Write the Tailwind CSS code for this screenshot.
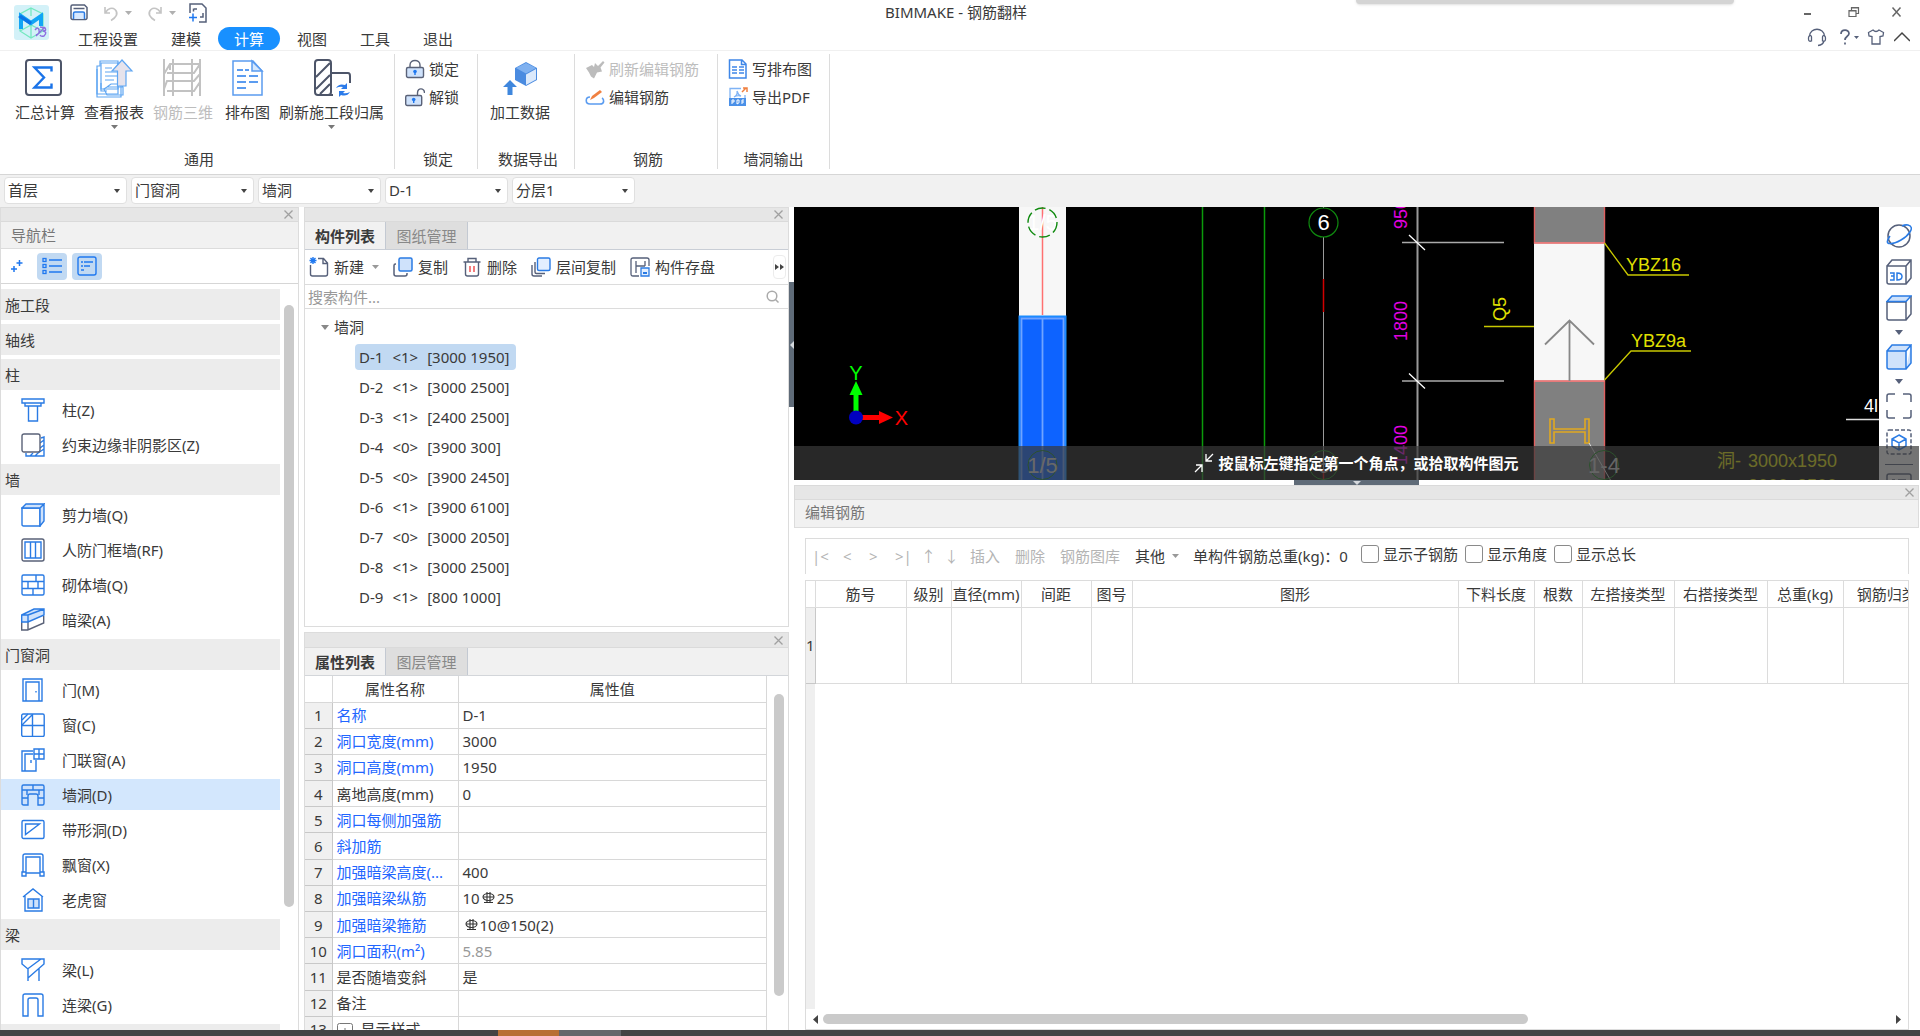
<!DOCTYPE html>
<html lang="zh-CN">
<head>
<meta charset="utf-8">
<title>BIMMAKE - 钢筋翻样</title>
<script src="https://cdn.jsdelivr.net/npm/@tailwindcss/browser@4"></script>
</head>
<body class="flex h-screen flex-col overflow-hidden bg-white font-['Noto_Sans','Noto_Sans_CJK_SC',sans-serif] text-[15px] leading-5 text-[#3a3a3a]">

<!-- Title bar and tabs -->
<header class="relative flex h-[51px] shrink-0 border-b border-[#f0f0f0]">
  <div class="absolute -top-1 right-[186px] h-2 w-[378px] rounded bg-[#d4d4d4] shadow"></div>
  <div class="w-[62px] shrink-0 pt-[5px] pl-[14px]">
    <svg class="size-[35px]" viewBox="0 0 35 35" fill="none"><rect width="35" height="35" rx="3" fill="#d3f1f8"/><path d="M17 3 29 9v17L17 33 6 26V9z M6 26 17 20l12 6 M17 3v8 M17 20v13" stroke="#74e8c0" stroke-width="1.3"/><path d="M7 24V11l10 7 10-7v10" stroke="#12a5f5" stroke-width="4"/><path d="M4 12l3-2 11 7-2 3z" fill="#0b74e8"/><path d="M21 25q3-4 4 0t-3 5M26 22l5 1q2 3-2 3 5 1 1 5-3 1-4-1M22 31l9-9" stroke="#8d6ee0" stroke-width="1.4"/></svg>
  </div>
  <div class="flex flex-1 flex-col">
    <div class="flex h-7 items-center pb-[2px]">
      <button aria-label="保存" class="ml-[8px]"><svg class="size-[18px]" viewBox="0 0 18 18" fill="none"><path d="M1 4V2.500a1.500 1.500 0 0 1 1.500-1.500h12l2.500 2.500V14a1.500 1.500 0 0 1-1.500 1.500h-13A1.500 1.500 0 0 1 1 14z" stroke="#56607a" stroke-width="1.500"/><path d="M3.500 4.500h11" stroke="#56607a" stroke-width="1.500"/><path d="M3.500 15V9.500a1.500 1.500 0 0 1 1.500-1.500h8a1.500 1.500 0 0 1 1.500 1.500V15" fill="#d8e9ff" stroke="#2a7be4" stroke-width="1.500"/></svg></button>
      <button aria-label="撤销" class="ml-[14px]"><svg class="size-[18px]" viewBox="0 0 18 18" fill="none" stroke="#c4c4c4" stroke-width="1.600"><path d="M3 3v6h5M3.500 8.500C6 4.500 10 3 13 5.500c4 4 1 8-4 11"/></svg></button>
      <svg class="ml-[5px] h-1 w-[7px]" viewBox="0 0 7 4" fill="#b0b0b0"><path d="M0 0h7L3.500 4z"/></svg>
      <button aria-label="重做" class="ml-[14px]"><svg class="size-[18px]" viewBox="0 0 18 18" fill="none" stroke="#c4c4c4" stroke-width="1.600"><path d="M15 3v6h-5M14.500 8.500C12 4.500 8 3 5 5.500c-4 4-1 8 4 11"/></svg></button>
      <svg class="ml-[5px] h-1 w-[7px]" viewBox="0 0 7 4" fill="#b0b0b0"><path d="M0 0h7L3.500 4z"/></svg>
      <button aria-label="新建视图" class="ml-[12px]"><svg class="size-5" viewBox="0 0 20 20" fill="none" stroke="#56607a" stroke-width="1.500"><path d="M2 10V1h12l4 4v14h-7M6 6h3M5.500 5.500v3M15 10v4h-3"/><path d="M1 14.500h8M5 10.500v8" stroke="#1f78f0"/></svg></button>
    </div>
    <nav class="flex h-[23px] gap-px">
      <button class="px-4">工程设置</button><button class="px-4">建模</button><button class="rounded-full bg-[#1890ff] px-4 text-white">计算</button><button class="px-4">视图</button><button class="px-4">工具</button><button class="px-4">退出</button>
    </nav>
  </div>
  <h1 class="absolute inset-x-0 top-[2px] pr-2 text-center font-normal">BIMMAKE - 钢筋翻样</h1>
  <div class="flex w-[116px] shrink-0 flex-col pr-[10px]">
    <div class="flex h-6 items-center justify-between pr-[7px]">
      <button aria-label="最小化"><svg class="size-3" viewBox="0 0 12 12"><path d="M0 7h7v2H0z" fill="#666"/></svg></button>
      <button aria-label="还原"><svg class="size-3" viewBox="0 0 12 12" fill="none" stroke="#666" stroke-width="1.200"><path d="M1 4.500h7v6H1zM1 5h7M3.500 4V1.500h7v6H8M3.500 2h7"/></svg></button>
      <button aria-label="关闭"><svg class="size-3" viewBox="0 0 12 12" fill="none" stroke="#666" stroke-width="1.500"><path d="m1.500 1.500 8 9M9.500 1.500l-8 9"/></svg></button>
    </div>
    <div class="flex h-[26px] items-center justify-between pl-[3px]">
      <button aria-label="客服"><svg class="size-5" viewBox="0 0 20 20" fill="none" stroke="#56607a" stroke-width="1.300"><path d="M2.500 9C3 0 17 0 17.500 9M2.500 9q2-1 2 1v4q-3 1-3-2 0-3 1-3zM17.500 9q-2-1-2 1v4q3 1 3-2 0-3-1-3zM17 14q-1 4-6 4.500"/></svg></button>
      <button aria-label="帮助" class="flex items-center"><svg class="size-[18px]" viewBox="0 0 18 18" fill="none" stroke="#56607a" stroke-width="1.700"><path d="M5 6c0-5 8-5 8-.5C13 8.500 9 8 9 12M9 14.500v2"/></svg><svg class="h-[3px] w-[5px]" viewBox="0 0 5 3" fill="#56607a"><path d="M0 0h5L2.500 3z"/></svg></button>
      <button aria-label="皮肤"><svg class="size-[18px]" viewBox="0 0 18 18" fill="none" stroke="#56607a" stroke-width="1.300"><path d="M6 2q3 3 6 0l4.500 2.500L16 8l-3 .5V16H5V8.500L2 8l-.5-3.500z"/></svg></button>
      <button aria-label="收起"><svg class="h-[18px] w-4" viewBox="0 0 16 18" fill="none" stroke="#444" stroke-width="1.500"><path d="m0 13 8-8 8 8"/></svg></button>
    </div>
  </div>
</header>

<!-- Ribbon -->
<section class="flex h-[124px] shrink-0 border-b border-[#d6d6d6] pt-[3px]">
  <div class="flex h-[115px] w-[395px] flex-col items-center justify-between border-r border-[#dcdcdc]">
    <div class="flex w-full gap-[9px] pt-[3px] pl-[15px]">
      <button class="flex w-[60px] flex-col items-center whitespace-nowrap"><svg class="size-[42px]" viewBox="0 0 42 42" fill="none"><rect x="2" y="3" width="35" height="35" rx="3" stroke="#4d5569" stroke-width="2"/><path d="M27.500 14.500v-4H10.500l9.500 10-9.500 10h17v-4" stroke="#1a73e8" stroke-width="2.400"/></svg><span class="mt-[3px]">汇总计算</span></button>
      <button class="flex w-[60px] flex-col items-center whitespace-nowrap"><svg class="size-[42px]" viewBox="0 0 42 42" fill="none" stroke="#5fa6f2" stroke-width="1.200"><path d="M7 4h18v33H4V9h3z" fill="#fff"/><path d="M8 6h17v26H8zM4 12v28h24V24"/><path d="M12 11h7M12 15h12M12 19h12M12 23h9M8 26v8h6M14 30h16v8H14l-3-6zM14 30l4-3h13l-2 3"/><path d="M29 3 19 14h5.500v15h8.500V14H39z" fill="#e6e3ec"/></svg><span class="mt-[3px]">查看报表</span><svg class="mt-[3px] h-1 w-[7px]" viewBox="0 0 7 4" fill="#777"><path d="M0 0h7L3.500 4z"/></svg></button>
      <button disabled class="flex w-[60px] flex-col items-center whitespace-nowrap text-[#bdbdbd]"><svg class="size-[42px]" viewBox="0 0 42 42" fill="none" stroke="#c2c2c2" stroke-width="2"><path d="M2 2v37M11 2v37M30 2v37M38 2v37M2 17l6-10h30M8 7v6M5 16h27l6-9M11 24H5l-3 8M11 24h21l6-7M5 34h27l6-9M30 7v9"/></svg><span class="mt-[3px]">钢筋三维</span></button>
      <button class="ml-[3px] flex w-[45px] flex-col items-center whitespace-nowrap"><svg class="size-[42px]" viewBox="0 0 42 42" fill="none" stroke="#5b9cf0" stroke-width="1.500"><path d="M6 4h20l9 10v24H6z" fill="#fff"/><path d="M25 4v10h10z" fill="#d6e8fd"/><path d="M10 13h6M18 13h4M10 19h9M22 19h9M10 25h9M22 25h9M10 31h9" stroke-width="2"/></svg><span class="mt-[3px]">排布图</span></button>
      <button class="flex w-[105px] flex-col items-center whitespace-nowrap"><svg class="size-[42px]" viewBox="0 0 42 42" fill="none" stroke="#4d5569" stroke-width="2"><rect x="4" y="3" width="16" height="35" rx="3"/><path d="M5 20 19 6M5 32l14-14M9 37l10-10M20 16h17q2 0 2 3v7M15 38h7"/><path d="M25 31q3-5 9-3l2-2v6h-6l2-2q-3-1-7 1zM39 35q-3 5-9 3l-2 2v-6h6l-2 2q3 1 7-1z" fill="#2b7bea" stroke="none"/></svg><span class="mt-[3px]">刷新施工段归属</span><svg class="mt-[3px] h-1 w-[7px]" viewBox="0 0 7 4" fill="#777"><path d="M0 0h7L3.500 4z"/></svg></button>
    </div>
    <div class="pl-1">通用</div>
  </div>
  <div class="flex h-[115px] w-[83px] flex-col items-center justify-between border-r border-[#dcdcdc]">
    <div class="flex w-full flex-col items-start gap-2 pt-[5px] pl-[10px]">
      <button class="flex items-center gap-1"><svg class="size-5" viewBox="0 0 20 20" fill="none" stroke="#5a6278" stroke-width="1.400"><path d="M5 9V6C5 0 15 0 15 6v3"/><rect x="1.500" y="8.500" width="17" height="10" rx="1.500" fill="#cfe2fb"/><circle cx="10" cy="12.500" r="1.800" fill="#1f78f0" stroke="none"/><path d="M10 12v4" stroke="#1f78f0"/></svg>锁定</button>
      <button class="flex items-center gap-1"><svg class="size-5" viewBox="0 0 20 20" fill="none" stroke="#5a6278" stroke-width="1.400"><path d="M12.500 9V6c0-6 7-5 7 0"/><rect x=".7" y="8.500" width="16" height="10" rx="1.500" fill="#cfe2fb"/><circle cx="8.700" cy="12.500" r="1.800" fill="#1f78f0" stroke="none"/><path d="M8.700 12v4" stroke="#1f78f0"/></svg>解锁</button>
    </div>
    <div class="pl-1">锁定</div>
  </div>
  <div class="flex h-[115px] w-[97px] flex-col items-center justify-between border-r border-[#dcdcdc]">
    <button class="flex flex-col items-center pt-[3px] pr-3"><svg class="size-[42px]" viewBox="0 0 42 42"><path d="m27 5 11 6v12l-11 6-11-6V11z" fill="#4a8be0"/><path d="m27 6 10 5-10 5.500-10-5.500z" fill="#7fb1f0"/><path d="m27 17.500 10-5.500v10.500L27 28z" fill="#dbe9fb"/><path d="m11 23-7 7h4.500v8h5v-8H18z" fill="#3f87dd"/></svg><span class="mt-[3px]">加工数据</span></button>
    <div class="pl-1">数据导出</div>
  </div>
  <div class="flex h-[115px] w-[143px] flex-col items-center justify-between border-r border-[#dcdcdc]">
    <div class="flex w-full flex-col items-start gap-2 pt-[5px] pl-[10px]">
      <button disabled class="flex items-center gap-1 text-[#bdbdbd]"><svg class="size-5" viewBox="0 0 20 20" fill="#bcbcbc"><path d="m1 9 6-3 2 2 1-4 3 3 5-5 1.500 1.500-4 5 1.500 4-5 1-3 6-3-2-1-2-1-2z"/></svg>刷新编辑钢筋</button>
      <button class="flex items-center gap-1"><svg class="size-5" viewBox="0 0 20 20" fill="none"><path d="M5 10c-5 0-5 7 0 7h10c5 0 4-5 2-6" stroke="#5b9cf0" stroke-width="1.600"/><path d="m5 13 2-4 8-6 2 2-8 6z" fill="#f08040"/></svg>编辑钢筋</button>
    </div>
    <div class="pl-1">钢筋</div>
  </div>
  <div class="flex h-[115px] w-[112px] flex-col items-center justify-between border-r border-[#dcdcdc]">
    <div class="flex w-full flex-col items-start gap-2 pt-[5px] pl-[10px]">
      <button class="flex items-center gap-1"><svg class="size-5" viewBox="0 0 20 20" fill="none" stroke="#3f87e8" stroke-width="1.500"><path d="M1.500 1H14l4 4v14H1.500zM13.500 1v4.500H18"/><path d="M4 8h5M11 8h5M4 11h5M11 11h5M4 14h5M11 14h5"/></svg>写排布图</button>
      <button class="flex items-center gap-1"><svg class="size-5" viewBox="0 0 20 20" fill="none"><path d="M2 11V1.500h11M17 8v3M9 4q1 4-3 6 3-2 7-1-3-1-4-5z" stroke="#7fb3f5" stroke-width="1.300"/><path d="M1 11h17v8H1z" fill="#4a90e8"/><path d="M4 17v-4h2v2H4M9 13v4q3-.5 2-4zM14 17v-4h2M14 15h2" stroke="#fff"/><path d="m14 5 4-4M15 1h4v4" stroke="#f08040" stroke-width="1.500"/></svg>导出PDF</button>
    </div>
    <div>墙洞输出</div>
  </div>
</section>

<!-- Context selectors -->
<form class="flex h-8 shrink-0 gap-1 bg-[#f1f1f1] pt-[2px] pl-1" id="combos"></form>

<main class="flex min-h-0 flex-1">
  <!-- Navigation panel -->
  <aside class="flex w-[299px] shrink-0 flex-col border-x border-[#dcdcdc]">
    <div class="flex h-[15px] shrink-0 items-center justify-end border-y border-[#dadada] bg-[#e6e6e6] pr-1"><button aria-label="关闭导航栏"><svg class="size-[11px]" viewBox="0 0 11 11" stroke="#a0a0a0" stroke-width="1.300"><path d="m1.500 1.500 8 8M9.500 1.500l-8 8"/></svg></button></div>
    <h2 class="h-[27px] shrink-0 border-b border-[#dcdcdc] bg-[#f1f1f1] pt-[3px] pl-[10px] text-[#777]">导航栏</h2>
    <div class="flex h-[35px] shrink-0 items-center gap-[5px] border-b border-[#d6d6d6] pl-2">
      <button aria-label="添加" class="mr-2"><svg class="size-[15px]" viewBox="0 0 15 15" stroke="#1f78f0" stroke-width="1.500"><path d="M10.500 1v6M7.500 4h6M5 7v6M2 10h6"/></svg></button>
      <button aria-label="列表" class="flex h-[27px] w-[30px] items-center justify-center rounded bg-[#c1d9f2]"><svg class="size-5" viewBox="0 0 20 20" fill="none" stroke="#1f78f0" stroke-width="1.300"><path d="M7 4h13M7 10h13M7 16h13"/><rect x="1" y="2.500" width="3" height="3"/><rect x="1" y="8.500" width="3" height="3"/><rect x="1" y="14.500" width="3" height="3"/></svg></button>
      <button aria-label="详细" class="flex h-[27px] w-[30px] items-center justify-center rounded bg-[#c1d9f2]"><svg class="size-5" viewBox="0 0 20 20" fill="none" stroke="#1f78f0" stroke-width="1.400"><rect x="1" y="1" width="18" height="18" rx="2"/><path d="M4 6h2M7 6h9M4 10h2M7 10h6M4 14h3"/></svg></button>
    </div>
    <div class="flex min-h-0 flex-1 overflow-hidden pt-[5px]">
      <div class="flex flex-1 flex-col gap-1" id="nav"></div>
      <div class="w-[18px] pt-4 pl-1"><div class="h-[602px] w-[10px] rounded-full bg-[#cacaca]"></div></div>
    </div>
  </aside>

  <!-- Component list and properties -->
  <section class="ml-[5px] flex w-[485px] shrink-0 flex-col">
    <div class="flex h-[420px] shrink-0 flex-col border border-[#dcdcdc]">
      <div class="flex h-[14px] shrink-0 items-center justify-end border-b border-[#dadada] bg-[#e6e6e6] pr-1"><button aria-label="关闭构件列表"><svg class="size-[11px]" viewBox="0 0 11 11" stroke="#a0a0a0" stroke-width="1.300"><path d="m1.500 1.500 8 8M9.500 1.500l-8 8"/></svg></button></div>
      <div class="flex h-[28px] shrink-0 border-b border-[#c9ced6] bg-[#f1f1f1]">
        <button class="w-[81px] border-r border-[#c3c9d2] font-bold">构件列表</button><button class="w-[82px] border-r border-[#c3c9d2] bg-[#dedede] text-[#888]">图纸管理</button>
      </div>
      <div class="flex h-[35px] shrink-0 items-center gap-[14px] border-b border-[#dcdcdc] pl-1 whitespace-nowrap">
        <button class="flex items-center gap-[5px]"><svg class="size-5" viewBox="0 0 20 20" fill="none" stroke="#56607a" stroke-width="1.400"><path d="M1.500 8v9q0 2 2 2h13q2 0 2-2V6l-4-4.500H9M14 2v4.500h4.500"/><path d="M4 0v7M.5 3.500h7M1.500 1l5 5M6.500 1l-5 5" stroke="#1f78f0"/></svg>新建<svg class="ml-[3px] h-1 w-[7px]" viewBox="0 0 7 4" fill="#999"><path d="M0 0h7L3.500 4z"/></svg></button>
        <button class="flex items-center gap-[5px]"><svg class="size-5" viewBox="0 0 20 20" fill="none" stroke-width="1.500"><path d="M3 7H2.500Q1 7 1 8.500V17q0 2 2 2h9q2 0 2-2v-1" stroke="#56607a"/><rect x="6" y="1" width="13" height="13" rx="1.500" fill="#cfe2fb" stroke="#2a7be4"/></svg>复制</button>
        <button class="flex items-center gap-[5px]"><svg class="size-5" viewBox="0 0 20 20" fill="none" stroke="#56607a" stroke-width="1.400"><path d="M1.500 5h17M6 5V1.500h8V5M3.500 5v12q0 2 2 2h9q2 0 2-2V5"/><path d="M8 9v6M12 9v6" stroke="#f04848"/></svg>删除</button>
        <button class="flex items-center gap-[5px]"><svg class="size-5" viewBox="0 0 20 20" fill="none" stroke-width="1.400"><path d="M4 5v10q0 1.500 1.500 1.500H14M1 8v9q0 2 2 2h8" stroke="#56607a"/><rect x="6.500" y="1" width="12.500" height="12.500" rx="1.500" fill="#e3efff" stroke="#2a7be4"/></svg>层间复制</button>
        <button class="flex items-center gap-[5px]"><svg class="size-5" viewBox="0 0 20 20" fill="none" stroke="#56607a" stroke-width="1.300"><path d="M9 19H3q-2 0-2-2V3q0-2 2-2h14q2 0 2 2v6M6 16V4M6 9h9M15 4v5"/><path d="M11 11h8v8h-8z" fill="#e3efff" stroke="#2a7be4"/><path d="M13 15h4v2h-4z" fill="#2a7be4" stroke="none"/></svg>构件存盘</button>
        <button aria-label="更多" class="mr-[2px] ml-auto flex h-6 w-[13px] items-center justify-center rounded border border-[#ececec]"><svg class="h-[6px] w-[9px]" viewBox="0 0 9 6" fill="#444"><path d="m0 0 4 3-4 3zM5 0l4 3-4 3z"/></svg></button>
      </div>
      <label class="flex h-6 shrink-0 items-center border-b border-[#dcdcdc] pr-[9px] pl-[3px]">
        <input type="text" aria-label="搜索构件" placeholder="搜索构件..." class="flex-1 outline-none placeholder:text-[#999]">
        <svg class="size-[13px]" viewBox="0 0 13 13" fill="none" stroke="#aaa" stroke-width="1.500"><circle cx="6" cy="6" r="4.800"/><path d="m9.500 9.500 3 3"/></svg>
      </label>
      <div class="flex flex-col pt-[3px] pl-4" id="tree">
        <button class="flex h-[30px] items-center gap-[5px]"><svg class="h-[5px] w-2" viewBox="0 0 8 5" fill="#888"><path d="M0 0h8L4 5z"/></svg>墙洞</button>
      </div>
    </div>
    <div class="mt-[5px] flex min-h-0 flex-1 flex-col border border-b-0 border-[#dcdcdc]">
      <div class="flex h-[15px] shrink-0 items-center justify-end border-b border-[#dadada] bg-[#e6e6e6] pr-1"><button aria-label="关闭属性列表"><svg class="size-[11px]" viewBox="0 0 11 11" stroke="#a0a0a0" stroke-width="1.300"><path d="m1.500 1.500 8 8M9.500 1.500l-8 8"/></svg></button></div>
      <div class="flex h-[28px] shrink-0 border-b border-[#d3d6da] bg-[#f1f1f1]">
        <button class="w-[81px] border-r border-[#c3c9d2] font-bold">属性列表</button><button class="w-[82px] border-r border-[#c3c9d2] bg-[#dedede] text-[#888]">图层管理</button>
      </div>
      <div class="flex min-h-0 flex-1 overflow-hidden">
        <table class="h-[367px] w-[462px] table-fixed border-collapse">
          <colgroup><col class="w-[27px]"><col class="w-[126px]"><col></colgroup>
          <thead><tr class="h-[26px]"><th class="border-r border-b border-[#d8d8d8]"></th><th class="border-r border-b border-[#d8d8d8] font-normal">属性名称</th><th class="border-r border-b border-[#d8d8d8] font-normal">属性值</th></tr></thead>
          <tbody id="props"></tbody>
        </table>
        <div class="pt-[18px] pl-[7px]"><div class="h-[302px] w-[10px] rounded-full bg-[#cacaca]"></div></div>
      </div>
    </div>
  </section>

  <!-- Splitter -->
  <div class="flex w-[5px] shrink-0 flex-col pt-[75px]"><div class="flex h-[125px] items-center justify-center bg-[#5f6b78]"><svg class="h-2 w-1" viewBox="0 0 4 8" fill="#d4d8dd"><path d="M4 0v8L0 4z"/></svg></div></div>

  <section class="flex min-w-0 flex-1 flex-col pr-px">
    <!-- Drawing viewport -->
    <div class="relative flex h-[273px] shrink-0 overflow-hidden bg-black">
      <svg class="h-full min-w-0 flex-1 font-['Liberation_Sans_Narrow','Liberation_Sans',sans-serif]" viewBox="794 207 1085 273" preserveAspectRatio="xMinYMin slice" fill="none">
        <path d="M1019 200h47v116h-47z" fill="#f7f7f7"/><path d="M1042.500 207v108" stroke="#ff7070" stroke-width="1.500"/>
        <text x="1042.500" y="230" font-size="22" text-anchor="middle" fill="#fff">1/5</text>
        <circle cx="1042.500" cy="222.500" r="14.500" stroke="#0f8a0f" stroke-width="1.400" stroke-dasharray="11 4"/>
        <path d="M1019.500 316.500h46v180h-46z" fill="#0d63ff" stroke="#1a8cff" stroke-width="2"/><path d="M1021.500 481V318.500h42V481M1042.500 318v163" stroke="#6fa4ff" stroke-width="1.800"/>
        <path d="M1202.500 207v274M1264.500 207v274" stroke="#0b9a0b" stroke-width="1.500"/>
        <path d="M1323.500 207v274" stroke="#9a9a9a"/><path d="M1323.500 279v33M1323.500 470v11" stroke="#d00000" stroke-width="1.500"/>
        <circle cx="1323.500" cy="222.500" r="14.500" stroke="#0f8a0f" stroke-width="1.200" fill="#000"/>
        <text x="1323.500" y="230" font-size="22" text-anchor="middle" fill="#fff">6</text>
        <circle cx="1042.500" cy="465" r="14.500" stroke="#0f8a0f"/><text x="1042.500" y="473" font-size="22" text-anchor="middle" fill="#d8d8d8">1/5</text>
        <circle cx="1323.500" cy="465" r="14.500" stroke="#0f8a0f"/><text x="1323.500" y="473" font-size="22" text-anchor="middle" fill="#aaa">6</text>
        <path d="M856 412v-20" stroke="#0f0" stroke-width="5"/><path d="M849.500 395 856 381l6.500 14z" fill="#0f0"/>
        <path d="M860 417.500h20" stroke="#f00" stroke-width="5"/><path d="m879 411 14 6.500-14 6.500z" fill="#f00"/><circle cx="856" cy="417.500" r="7" fill="#0000c0"/>
        <g font-size="20" text-anchor="middle"><text x="856" y="380" fill="#0f0">Y</text><text x="901.500" y="425" fill="#f00">X</text></g>
        <path d="M1417.500 207v274" stroke="#999" stroke-width="2"/><path d="M1402 242.500h102M1402 381h102" stroke="#aaa" stroke-width="1.500"/><path d="m1409 235 16 15M1409 373.500l16 15" stroke="#fff" stroke-width="1.300"/>
        <g fill="#e000e0" font-size="18"><text transform="translate(1407 229) rotate(-90)">950</text><text transform="translate(1407 341) rotate(-90)">1800</text><text transform="translate(1407 465) rotate(-90)">1400</text></g>
        <path d="M1534.500 200h70v43h-70zM1534.500 381h70v110h-70z" fill="#808080" stroke="#e06060" stroke-width="1.400"/><path d="M1534 243.500h70.500v137H1534z" fill="#f7f7f7"/>
        <path d="M1534 243h70.500M1534 381h70.500" stroke="#f08080" stroke-width="1.300"/>
        <path d="M1569.500 381v-60M1545 344.500l24.500-24 24.500 24" stroke="#888" stroke-width="1.800"/>
        <path d="M1550 419h4v10h31v-10h4v24h-4v-11h-31v11h-4z" stroke="#e0a820" stroke-width="1.600"/><path d="m1589 443 22 38" stroke="#ddd"/>
        <g stroke="#c8c800" stroke-width="1.300"><path d="m1604.500 243 23.500 32h61M1604.500 380l26.500-29h60"/><path d="M1484 326.500h50"/></g>
        <g fill="#e0e000" font-size="18"><text x="1626" y="271">YBZ16</text><text x="1631" y="347">YBZ9a</text><text transform="translate(1506 321) rotate(-90)">Q5</text></g>
        <circle cx="1604" cy="465" r="14.500" stroke="#0f8a0f"/><text x="1604" y="473" font-size="22" text-anchor="middle" fill="#ccc">1-4</text>
        <g fill="#e0e000" font-size="18"><text x="1717" y="467">洞-</text><text x="1748" y="467">3000x1950</text><text x="1748" y="492">3000x2500</text></g>
        <text x="1864" y="412" font-size="18" fill="#fff">4l</text><path d="M1846 419.500h34" stroke="#ddd" stroke-width="1.500"/>
      </svg>
      <div class="flex w-10 shrink-0 flex-col items-center bg-white pt-4">
        <button aria-label="动态观察"><svg class="size-[26px]" viewBox="0 0 26 26" fill="none" stroke-width="1.500"><circle cx="13" cy="13" r="11" stroke="#56607a"/><path d="M4 13C-4 24 8 21 15 17S30 4 22 2q-3-.5-6 1" stroke="#2a7be4"/></svg></button>
        <button aria-label="三维视图" class="mt-[10px]"><svg class="size-[26px]" viewBox="0 0 26 26" fill="none" stroke="#56607a" stroke-width="1.500"><path d="M1 7h19v18H3q-2 0-2-2zM1 7l5-6h19v18l-5 6M20 7l5-6"/><path d="M4 14h4v3H5h3v4H4M11 14v7q5 0 5-3.500T11 14z" stroke="#2a7be4"/></svg></button>
        <button aria-label="俯视" class="mt-[10px]"><svg class="size-[26px]" viewBox="0 0 26 26" fill="none" stroke="#56607a" stroke-width="1.500"><path d="M1 7h19v18H3q-2 0-2-2zM25 1v18l-5 6"/><path d="M1 6.500 6 1h19l-5 5.500z" fill="#cfe2fb" stroke="#2a7be4"/></svg></button>
        <svg class="mt-[9px] h-[5px] w-2 shrink-0" viewBox="0 0 8 5" fill="#56607a"><path d="M0 0h8L4 5z"/></svg>
        <button aria-label="显示模式" class="mt-[9px]"><svg class="size-[26px]" viewBox="0 0 26 26" fill="#cfe2fb" stroke="#2a7be4" stroke-width="1.500"><path d="M1 7h19v18H3q-2 0-2-2zM1 7l5-6h19l-5 6M25 1v18l-5 6"/></svg></button>
        <svg class="mt-[9px] h-[5px] w-2 shrink-0" viewBox="0 0 8 5" fill="#56607a"><path d="M0 0h8L4 5z"/></svg>
        <button aria-label="全屏" class="mt-[9px]"><svg class="size-[26px]" viewBox="0 0 26 26" fill="none" stroke="#56607a" stroke-width="1.500"><path d="M1 9V3q0-2 2-2h6M17 1h6q2 0 2 2v6M25 17v6q0 2-2 2h-6M9 25H3q-2 0-2-2v-6"/></svg></button>
        <button aria-label="局部三维" class="mt-[10px]"><svg class="size-[26px]" viewBox="0 0 26 26" fill="none" stroke-width="1.500"><rect x="1" y="1" width="24" height="24" rx="2" stroke="#56607a" stroke-dasharray="4 2"/><path d="m13 6 7 4v7l-7 4-7-4v-7zM6 10l7 4 7-4M13 14v7" stroke="#2a7be4"/></svg></button>
        <div class="mt-[9px] h-px w-7 shrink-0 bg-[#56607a]"></div>
        <svg class="mt-2 size-[26px] shrink-0" viewBox="0 0 26 26" fill="none" stroke="#56607a" stroke-width="1.500"><rect x="1" y="1" width="24" height="24" rx="2"/><path d="M6 7h3M12 7h8M6 13h14"/></svg>
      </div>
      <div class="absolute inset-x-0 bottom-0 flex h-[34px] items-center justify-center gap-1 bg-[#393939]/70 font-bold text-white">
        <svg class="size-5" viewBox="0 0 20 20" fill="none" stroke="#fff" stroke-width="1.300"><path d="m1 19 7-7M2 12h6v7M19 1l-7 7M12 1v7h6"/></svg>
        <span>按鼠标左键指定第一个角点，或拾取构件图元</span>
      </div>
    </div>
    <div class="flex h-[5px] shrink-0 justify-center"><div class="flex w-[125px] items-center justify-center bg-[#5f6b78]"><svg class="h-1 w-2" viewBox="0 0 8 4" fill="#d4d8dd"><path d="M0 0h8L4 4z"/></svg></div></div>

    <!-- Rebar editor -->
    <div class="flex h-[15px] shrink-0 items-center justify-end border border-[#dadada] bg-[#e6e6e6] pr-[3px]"><button aria-label="关闭编辑钢筋"><svg class="size-[11px]" viewBox="0 0 11 11" stroke="#a0a0a0" stroke-width="1.300"><path d="m1.500 1.500 8 8M9.500 1.500l-8 8"/></svg></button></div>
    <h2 class="h-[28px] shrink-0 border border-t-0 border-[#dcdcdc] bg-[#f1f1f1] pt-[2px] pl-[10px] text-[#777]">编辑钢筋</h2>
    <div class="mr-[10px] ml-[11px] mt-[10px] flex h-9 shrink-0 items-center border border-b-0 border-[#dcdcdc] pb-px pl-[6px] whitespace-nowrap text-[#b4b4b4]">
      <button aria-label="首行" disabled class="w-[31px] text-left">|&lt;</button><button aria-label="上一行" disabled class="w-[26px] text-left">&lt;</button><button aria-label="下一行" disabled class="w-[26px] text-left">&gt;</button><button aria-label="末行" disabled class="w-[26px] text-left">&gt;|</button>
      <button aria-label="上移" disabled class="w-[23px] text-left">↑</button><button aria-label="下移" disabled class="w-[26px] text-left">↓</button>
      <button disabled class="w-[45px] text-left">插入</button><button disabled class="w-[45px] text-left">删除</button><button disabled class="w-[75px] text-left">钢筋图库</button>
      <button class="flex w-[58px] items-center gap-[7px] text-[#3a3a3a]">其他<svg class="h-1 w-[7px]" viewBox="0 0 7 4" fill="#999"><path d="M0 0h7L3.500 4z"/></svg></button>
      <span class="w-[168px] text-[#3a3a3a]">单构件钢筋总重(kg)：0</span>
      <div class="flex gap-[7px] pb-1 text-[#3a3a3a]">
        <label class="flex items-center gap-1"><input type="checkbox" class="size-[18px] appearance-none rounded-[3px] border border-[#8a8a8a] bg-white">显示子钢筋</label>
        <label class="flex items-center gap-1"><input type="checkbox" class="size-[18px] appearance-none rounded-[3px] border border-[#8a8a8a] bg-white">显示角度</label>
        <label class="flex items-center gap-1"><input type="checkbox" class="size-[18px] appearance-none rounded-[3px] border border-[#8a8a8a] bg-white">显示总长</label>
      </div>
    </div>
    <div class="mr-[10px] ml-[11px] mt-[6px] flex min-h-0 flex-1 flex-col border border-[#dcdcdc]">
      <div class="flex min-h-0 flex-1 flex-col overflow-hidden">
        <table class="w-[1125px] shrink-0 table-fixed border-collapse whitespace-nowrap">
          <colgroup><col class="w-[9px]"><col class="w-[91px]"><col class="w-[45px]"><col class="w-[70px]"><col class="w-[70px]"><col class="w-[41px]"><col class="w-[326px]"><col class="w-[76px]"><col class="w-[48px]"><col class="w-[92px]"><col class="w-[93px]"><col class="w-[76px]"><col></colgroup>
          <thead><tr class="h-[26px]" id="rebarHead"></tr></thead>
          <tbody><tr class="h-[76px]" id="rebarRow"></tr></tbody>
        </table>
        <div class="w-[9px] flex-1 bg-[#efefef]"></div>
      </div>
      <div class="flex h-[20px] shrink-0 items-center gap-[5px] px-[7px]">
        <svg class="h-[9px] w-[5px]" viewBox="0 0 5 9" fill="#444"><path d="M5 0v9L0 4.500z"/></svg>
        <div class="flex-1"><div class="h-[10px] w-[66%] rounded-full bg-[#cacaca]"></div></div>
        <svg class="h-[9px] w-[5px]" viewBox="0 0 5 9" fill="#444"><path d="M0 0v9l5-4.500z"/></svg>
      </div>
    </div>
  </section>
</main>

<footer class="flex h-[6px] shrink-0 bg-[#444]"><div class="ml-[498px] w-[61px] bg-[#b87034]"></div><div class="w-[62px] bg-[#64676b]"></div></footer>

<script>
const el = id => document.getElementById(id);

el('combos').innerHTML = [['楼层','首层'],['构件类别','门窗洞'],['构件类型','墙洞'],['构件','D-1'],['分层','分层1']].map(([n, v]) =>
  `<div class="relative h-[27px] w-[123px]"><select aria-label="${n}" class="h-full w-full appearance-none rounded border border-[#e0e0e0] bg-white pb-[2px] pl-[3px] outline-none"><option>${v}</option></select><svg class="pointer-events-none absolute top-3 right-[7px] h-1 w-[6px]" viewBox="0 0 6 4" fill="#444"><path d="M0 0h6L3 4z"/></svg></div>`).join('');

const icons = {
  column: '<path d="M1 1h22v4H1zM4 5h16v3H4zM7.500 8h9v15h-9z"/>',
  edge: '<path d="M20 5l3-1v19H5v-3M19 10l4-3M19 15l4-3M17 20l6-4M12 20l-3 3M17 20l-3 3"/><rect x="1" y="1" width="18" height="18" rx="2" fill="#fff" stroke="#5a6278"/>',
  wall: '<path d="M1 5h18v18H2.500Q1 23 1 21.500z"/><path d="M1 5l4-4h18l-4 4zM19 5l4-4v17l-4 5z" fill="#cfe2fb"/>',
  frame: '<rect x="1" y="1" width="22" height="22" rx="2" stroke="#5a6278"/><path d="M4 4h16v16H4zM9.500 4v16M14.500 4v16"/>',
  brick: '<rect x="1" y="2" width="22" height="20" rx="1.500"/><path d="M1 8.500h22M1 15.500h22M15 2v6.500M7 8.500v7M17 8.500v7M12 15.500V22"/>',
  beamA: '<path d="M.7 13v9h6l16-7V8M7 14v8" stroke="#5a6278"/><path d="M.7 7 13 1h10v6L7 14H.7zM.7 7H7v7M7 7l16-6" fill="#cfe2fb"/>',
  door: '<path d="M2 1h19v22H2zM5 23V4h13v19"/><path d="M15 13v1.500"/>',
  window: '<rect x=".7" y="1" width="22.500" height="22.500" rx="1.500"/><path d="M11.500 1v22M1 12.500h22M1 7l6-6M1 12 11 2"/>',
  doorwin: '<path d="M12 3H1v20h14V12M4 23V6h8M10 12v3"/><path d="M13 1h10v10H13zM18 1v10M13 6h10"/>',
  hole: '<path d="M2.500 2h19Q23 2 23 3.500v17q0 1.500-1.500 1.500H17v-9q0-2-2-2H9q-2 0-2 2v9H2.500Q1 22 1 20.500v-17Q1 2 2.500 2z" fill="#cfe2fb"/><path d="M1 7h22M1 15h6M17 15h6M12 2v5M6 7v5M18 7v5"/>',
  strip: '<rect x="1" y="2.500" width="22" height="18" rx="1.500"/><path d="M4.500 16.500V6h14z"/>',
  bay: '<path d="M2 19V3q0-2 2-2h16q2 0 2 2v16M5 19V4h14v15M1 19h4v4H1zM19 19h4v4h-4zM5 20h14"/>',
  dormer: '<path d="M2 9 12 1l10 8M4 8v15h17V8"/><path d="M7 11h11v9H7zM12.500 11v9" fill="#cfe2fb"/>',
  beam: '<path d="M7 23V11L1 6V1h22v5L7 20M6.500 11 20 1M18 10v13"/>',
  link: '<path d="M2 23V3q0-2 2-2h16q2 0 2 2v20h-5V7q0-2-2-2H9Q7 5 7 7v16z"/>'
};
const nav = ['施工段','轴线','柱',['column','柱(Z)'],['edge','约束边缘非阴影区(Z)'],'墙',['wall','剪力墙(Q)'],['frame','人防门框墙(RF)'],['brick','砌体墙(Q)'],['beamA','暗梁(A)'],'门窗洞',['door','门(M)'],['window','窗(C)'],['doorwin','门联窗(A)'],['hole','墙洞(D)'],['strip','带形洞(D)'],['bay','飘窗(X)'],['dormer','老虎窗'],'梁',['beam','梁(L)'],['link','连梁(G)'],''];
el('nav').innerHTML = nav.map(n => typeof n === 'string'
  ? `<h3 class="flex h-[31px] shrink-0 items-center bg-[#ececec] pl-1">${n}</h3>`
  : `<button class="flex h-[31px] shrink-0 items-center gap-[17px] pl-5 ${n[0] === 'hole' ? 'bg-[#d3e7fd]' : ''}"><svg class="size-6" viewBox="0 0 24 24" fill="none" stroke="#2a7be4" stroke-width="1.400">${icons[n[0]]}</svg>${n[1]}</button>`).join('');

[['D-1','<1>','[3000 1950]'],['D-2','<1>','[3000 2500]'],['D-3','<1>','[2400 2500]'],['D-4','<0>','[3900 300]'],['D-5','<0>','[3900 2450]'],['D-6','<1>','[3900 6100]'],['D-7','<0>','[3000 2050]'],['D-8','<1>','[3000 2500]'],['D-9','<1>','[800 1000]']].forEach((r, i) => {
  el('tree').insertAdjacentHTML('beforeend', `<div class="flex h-[30px] items-center pl-[34px]"><button class="flex h-[26px] items-center gap-[9px] rounded px-1 ${i ? '' : 'bg-[#c1d9f2] pr-[6px]'}">${r.map(t => `<span>${t.replace('<', '&lt;').replace('>', '&gt;')}</span>`).join('')}</button></div>`);
});

const bar = '<svg class="mx-[2px] mb-1 inline h-3 w-[13px]" viewBox="0 0 13 12" fill="none" stroke="#333" stroke-width="1.100"><ellipse cx="6.500" cy="5" rx="5.500" ry="3.500"/><path d="M5 0v11M8 0v11M2 10.500h9M1 5h11"/></svg>';
const plus = '<svg class="mr-2 inline size-4" viewBox="0 0 16 16" fill="none" stroke="#777"><rect x=".5" y=".5" width="15" height="15" rx="2"/><path d="M5 8h6M8 5v6"/></svg>';
el('props').innerHTML = [['名称','D-1',1],['洞口宽度(mm)','3000',1],['洞口高度(mm)','1950',1],['离地高度(mm)','0'],['洞口每侧加强筋','',1],['斜加筋','',1],['加强暗梁高度(...','400',1],['加强暗梁纵筋','10' + bar + '25',1],['加强暗梁箍筋',bar + '10@150(2)',1],['洞口面积(m²)','<span class="text-[#999]">5.85</span>',1],['是否随墙变斜','是'],['备注',''],[plus + '显示样式','']].map((p, i) =>
  `<tr class="h-[26px]"><td class="border-r border-b border-[#c8c8c8] bg-[#f0f0f0] text-center">${i + 1}</td><td class="overflow-hidden border-r border-b border-[#d8d8d8] pl-1 whitespace-nowrap ${p[2] ? 'text-[#2266ff]' : ''}">${p[0]}</td><td class="border-r border-b border-[#d8d8d8] pl-1">${p[1]}</td></tr>`).join('');

const cols = ['','筋号','级别','直径(mm)','间距','图号','图形','下料长度','根数','左搭接类型','右搭接类型','总重(kg)','钢筋归类'];
el('rebarHead').innerHTML = cols.map(c => `<th class="border-r border-b border-[#dcdcdc] p-0 font-normal">${c}</th>`).join('');
el('rebarRow').innerHTML = cols.map((c, i) => i ? '<td class="border-r border-b border-[#dcdcdc]"></td>' : '<td class="border-r border-b border-[#c8c8c8] bg-[#efefef] p-0 text-center">1</td>').join('');
</script>
</body>
</html>
